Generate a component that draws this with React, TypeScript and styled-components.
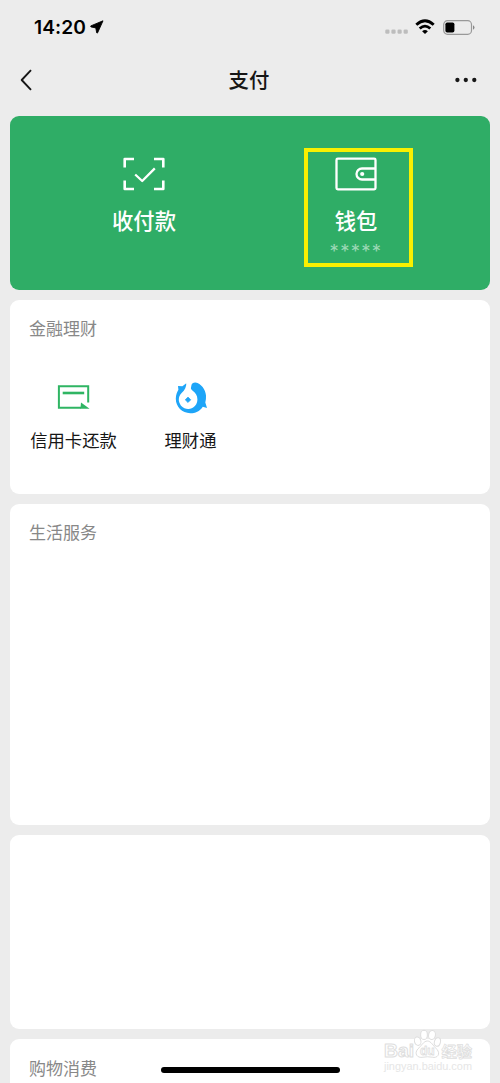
import React from "react";
import styled, { createGlobalStyle } from "styled-components";

const GlobalStyle = createGlobalStyle`
  * { box-sizing: border-box; }
  body {
    margin: 0;
    background: #ececec;
    font-family: "Inter", "Noto Sans CJK SC", sans-serif;
    color: #161616;
  }
  svg { display: block; flex: none; }
`;

const Screen = styled.div`
  position: relative;
  width: 500px;
  height: 1083px;
  overflow: hidden;
  background: #ececec;
`;

const StatusBar = styled.div`
  display: flex;
  justify-content: space-between;
  align-items: center;
  height: 54px;
  padding: 0 25px 0 34px;
`;

const Clock = styled.div`
  display: flex;
  align-items: center;
  gap: 4px;
  font-size: 19.2px;
  font-weight: 600;
  letter-spacing: 0.1px;
  color: #000;
`;

const Indicators = styled.div`
  display: flex;
  align-items: center;

  svg + svg { margin-left: 6px; }
  svg:last-child { margin-left: 8px; }
`;

const NavBar = styled.div`
  display: grid;
  grid-template-columns: 60px 1fr 60px;
  align-items: center;
  height: 52px;
  padding: 0 23px 0 20px;

  svg:last-child { justify-self: end; }
`;

const Title = styled.h1`
  margin: -2px 0 0 1px;
  text-align: center;
  font: 500 20.4px/30px "Noto Sans CJK SC", sans-serif;
`;

const Stack = styled.main`
  display: flex;
  flex-direction: column;
  gap: 10px;
  padding: 10px 10px 0;
`;

const PayPanel = styled.section`
  display: grid;
  grid-template-columns: 212px 212px;
  justify-content: center;
  height: 174px;
  padding-top: 32px;
  border-radius: 9px;
  background: #2fad66;
  color: #fff;
`;

const PayItem = styled.div`
  position: relative;
  display: flex;
  flex-direction: column;
  align-items: center;
  padding-top: 9px;
`;

const PayLabel = styled.span`
  margin-top: 13px;
  font: 500 21.3px/32px "Noto Sans CJK SC", sans-serif;
`;

const Masked = styled.span`
  margin-top: 5px;
  font: 400 18.5px/20px "Inter", sans-serif;
  letter-spacing: 1.3px;
  color: #9bd8b5;
`;

const Highlight = styled.div`
  position: absolute;
  left: 54px;
  top: 0;
  width: 109px;
  height: 119px;
  border: 4px solid #f8f000;
`;

const Card = styled.section<{ $height: number }>`
  height: ${(p) => p.$height}px;
  padding: 15px 19px 0;
  border-radius: 9px;
  background: #fff;

  &:last-child { padding-top: 16px; }
`;

const CardTitle = styled.h2`
  margin: 0;
  font: 400 17px/25px "Noto Sans CJK SC", sans-serif;
  color: #888;
`;

const Services = styled.div`
  display: grid;
  grid-template-columns: 117px 117px;
  margin: 41px 0 0 -14px;
`;

const Service = styled.div`
  display: flex;
  flex-direction: column;
  align-items: center;
  gap: 12px;
  font: 400 17.3px/26px "Noto Sans CJK SC", sans-serif;
`;

const HomeIndicator = styled.div`
  position: absolute;
  left: 161px;
  top: 1067px;
  width: 179px;
  height: 6px;
  border-radius: 3px;
  background: #000;
`;

const Watermark = styled.svg`
  position: absolute;
  left: 380px;
  top: 1026px;
`;

const LocationArrow = () => (
  <svg width="14" height="14" viewBox="0 0 14 14" stroke="#000" strokeWidth=".9" strokeLinejoin="round">
    <path d="M13 .8 L.8 5.9 Q.4 6.5 1 6.9 L5.8 7.9 L6.7 12.8 Q7.1 13.5 7.6 12.8 Z" />
  </svg>
);

const SignalDots = () => (
  <svg width="24" height="24" viewBox="0 -13 24 24" fill="#bdbdbd">
    {[0, 1, 2, 3].map((i) => (
      <rect key={i} x={0.3 + i * 6.1} y="1.5" width="4.2" height="4.2" rx="1.3" />
    ))}
  </svg>
);

const Wifi = () => (
  <svg width="20" height="16" viewBox="0 0 20 16" fill="none" stroke="#000" strokeWidth="2.8">
    <path d="M1.3 5.8 Q10 -2.3 18.7 5.8" />
    <path d="M4.7 9.5 Q10 4.7 15.3 9.5" />
    <path d="M10 15 L7.1 12.2 Q10 9.7 12.9 12.2 Z" fill="#000" stroke="none" />
  </svg>
);

const Battery = () => (
  <svg width="32" height="15" viewBox="0 0 32 15">
    <rect x=".7" y=".7" width="27.8" height="13.6" rx="3.8" fill="none" stroke="#999" strokeWidth="1.2" />
    <rect x="2.4" y="2.4" width="9" height="10.2" rx="1.8" />
    <path d="M30 5.2 Q31.5 6 31.5 7.5 Q31.5 9 30 9.8 Z" fill="#888" />
  </svg>
);

const BackIcon = () => (
  <svg width="13" height="22" viewBox="0 0 13 22" fill="none" stroke="#161616" strokeWidth="1.9">
    <path d="M11 1.2 L1.7 11 L11 20.8" strokeLinejoin="round" />
  </svg>
);

const MoreIcon = () => (
  <svg width="22" height="6" viewBox="0 0 22 6" fill="#161616">
    <circle cx="2.4" cy="3" r="2.15" />
    <circle cx="10.8" cy="3" r="2.15" />
    <circle cx="19.3" cy="3" r="2.15" />
  </svg>
);

const ScanIcon = () => (
  <svg width="42" height="34" viewBox="0 0 42 34" fill="none" stroke="#fff" strokeWidth="2.6" strokeLinejoin="round">
    <path d="M1.7 10.5 V2 H11 M31 2 H40.3 V10.5 M40.3 23.5 V32 H31 M11 32 H1.7 V23.5" />
    <path d="M12.2 17.5 L19.2 24 L31.8 11.4" strokeWidth="2.3" />
  </svg>
);

const WalletIcon = () => (
  <svg width="42" height="34" viewBox="0 0 42 34" fill="none" stroke="#fff" strokeWidth="2.3">
    <rect x="1.5" y="1.7" width="39" height="30.6" rx="1.3" />
    <path d="M40.5 11.5 H27 A5.5 5.5 0 0 0 27 22.5 H40.5" />
    <circle cx="27.2" cy="17" r="2.1" fill="#fff" stroke="none" />
  </svg>
);

const CreditIcon = () => (
  <svg width="34" height="34" viewBox="0 0 34 34" fill="none" stroke="#2fb563">
    <path d="M31.2 21.5 V5.3 H1.9 V26.8 H24" strokeWidth="2" />
    <path d="M5.7 12 H27.2" strokeWidth="2.6" />
    <path d="M24 21.4 L32.6 27.8 H23.4 Z" fill="#2fb563" stroke="none" />
  </svg>
);

const FundIcon = () => (
  <svg width="34" height="34" viewBox="0 0 34 34" fill="#1ea5f8">
    <path d="M4 5 L8.4 5.2 L12.3 2.2 L16.5 9 L17.5 4 Q18 1.4 21.5 1.5 C27 2.4 31.6 8.5 32 14.5 Q32.2 18 31.3 21.5 L33 27 L28.8 25.7 C25.5 30.5 21 32.4 16.3 32.3 C8 32 1.8 25.8 1.8 17.8 C1.8 13.8 3.2 10.8 4.4 8.8 Z" />
    <path d="M12.4 1.5 L17.6 1.5 C15.4 4.8 16 7.4 18.4 9.6 C21.5 12 23.6 14.9 23.4 18.8 A9.3 9.3 0 1 1 7.6 12 C11 8.8 12.4 6 12.4 1.5 Z" fill="#fff" />
    <path d="M14 16 L16.8 18.8 L14 21.6 L11.2 18.8 Z" stroke="#1ea5f8" strokeWidth=".6" strokeLinejoin="round" />
  </svg>
);

const BaiduMark = () => (
  <Watermark width="100" height="50" viewBox="0 0 100 50" fill="#fff" stroke="#dedede" strokeWidth="1" strokeLinejoin="round">
    <text x="4" y="30.5" fontFamily="Liberation Sans, sans-serif" fontWeight="700" fontSize="18.5" textLength="30" lengthAdjust="spacingAndGlyphs">Bai</text>
    <ellipse cx="37.7" cy="15.2" rx="3.2" ry="4.3" transform="rotate(-15 37.7 15.2)" />
    <ellipse cx="44" cy="8.9" rx="3.4" ry="4.6" />
    <ellipse cx="52" cy="9" rx="3.4" ry="4.6" transform="rotate(10 52 9)" />
    <ellipse cx="57.4" cy="16" rx="3" ry="4.3" transform="rotate(15 57.4 16)" />
    <path d="M47.4 15 C51 15 53.3 20 56.8 23.2 C61 28 57.3 32.5 52.2 31.2 Q47.5 30.3 43 31.2 C37 32.4 34 27.5 37.8 23 C41.5 20 43.5 15 47.4 15 Z" />
    <text x="40" y="29" fontFamily="Liberation Sans, sans-serif" fontWeight="700" fontSize="12" strokeWidth=".8">du</text>
    <text x="61.5" y="30.5" fontFamily="Noto Sans CJK SC, sans-serif" fontWeight="700" fontSize="15.3" strokeWidth=".8">经验</text>
    <text x="4" y="43.5" fontFamily="Liberation Sans, sans-serif" fontSize="10" fill="#e6e6e6" stroke="none" textLength="88" lengthAdjust="spacingAndGlyphs">jingyan.baidu.com</text>
  </Watermark>
);

export default function App() {
  return (
    <Screen>
      <GlobalStyle />
      <StatusBar>
        <Clock>
          14:20
          <LocationArrow />
        </Clock>
        <Indicators>
          <SignalDots />
          <Wifi />
          <Battery />
        </Indicators>
      </StatusBar>
      <NavBar>
        <BackIcon />
        <Title>支付</Title>
        <MoreIcon />
      </NavBar>
      <Stack>
        <PayPanel>
          <PayItem>
            <ScanIcon />
            <PayLabel>收付款</PayLabel>
          </PayItem>
          <PayItem>
            <WalletIcon />
            <PayLabel>钱包</PayLabel>
            <Masked>*****</Masked>
            <Highlight />
          </PayItem>
        </PayPanel>
        <Card $height={194}>
          <CardTitle>金融理财</CardTitle>
          <Services>
            <Service>
              <CreditIcon />
              信用卡还款
            </Service>
            <Service>
              <FundIcon />
              理财通
            </Service>
          </Services>
        </Card>
        <Card $height={321}>
          <CardTitle>生活服务</CardTitle>
        </Card>
        <Card $height={194} />
        <Card $height={80}>
          <CardTitle>购物消费</CardTitle>
        </Card>
      </Stack>
      <BaiduMark />
      <HomeIndicator />
    </Screen>
  );
}
